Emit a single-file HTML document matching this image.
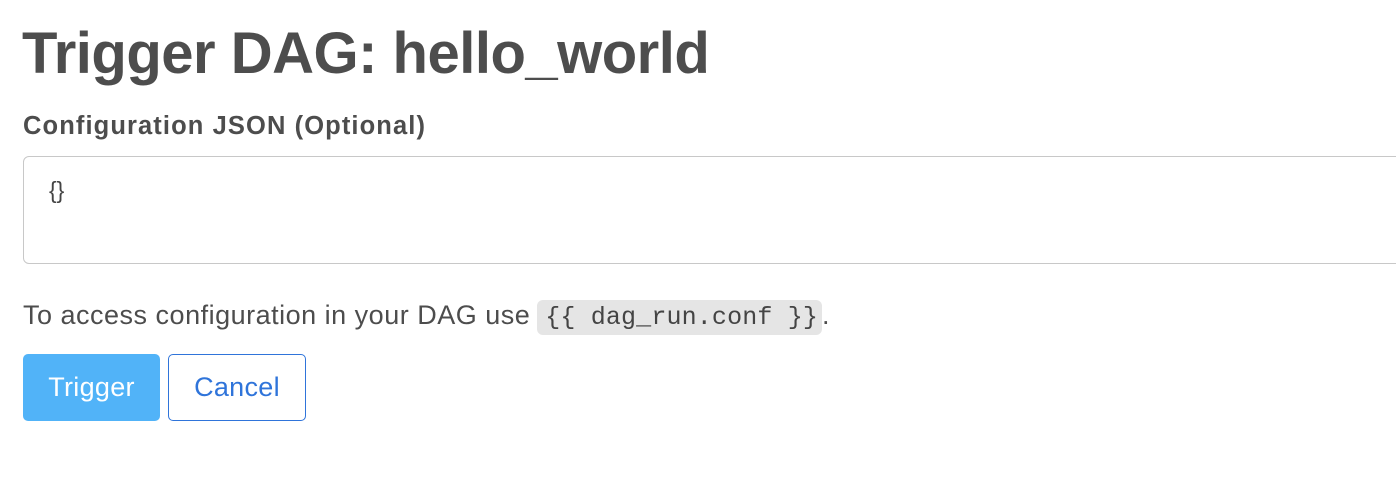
<!DOCTYPE html>
<html><head><style>
body{margin:0;width:1396px;height:504px;background:#fff;font-family:"Liberation Sans",sans-serif;color:#4a4a4a;overflow:hidden;position:relative}
h1{position:absolute;left:22px;top:18px;margin:0;font-size:58px;font-weight:bold;line-height:72px;color:#4d4d4d;letter-spacing:-0.5px}
.lbl{position:absolute;left:23px;top:112px;font-size:25.5px;font-weight:bold;color:#4d4d4d;letter-spacing:1.1px}
.ta{position:absolute;left:23px;top:156px;width:1400px;height:108px;border:1.5px solid #c8c8c8;border-radius:6px;box-sizing:border-box}
.ta span{position:absolute;left:25px;top:20px;font-size:23px;color:#444}
p{position:absolute;left:23px;top:297px;margin:0;font-size:27px;line-height:36px;color:#4d4d4d;letter-spacing:0.5px;white-space:nowrap}
code{font-family:"Liberation Mono",monospace;font-size:25px;background:#e5e5e5;border-radius:6px;padding:3px 4px 3px 8px;color:#444;letter-spacing:0.15px;margin-left:-1px}
.b{position:absolute;top:354px;height:67px;box-sizing:border-box;border-radius:5px;font-size:27px;line-height:67px;text-align:center;letter-spacing:0.3px}
.t{left:23px;width:137px;background:#51b3f8;color:#fff}
.c{left:168px;width:138px;border:1.5px solid #2f74da;color:#2f74da;line-height:64px}
</style></head><body>
<h1>Trigger DAG: hello_world</h1>
<div class="lbl">Configuration JSON (Optional)</div>
<div class="ta"><span>{}</span></div>
<p>To access configuration in your DAG use <code>{{ dag_run.conf }}</code>.</p>
<div class="b t">Trigger</div>
<div class="b c">Cancel</div>
</body></html>
